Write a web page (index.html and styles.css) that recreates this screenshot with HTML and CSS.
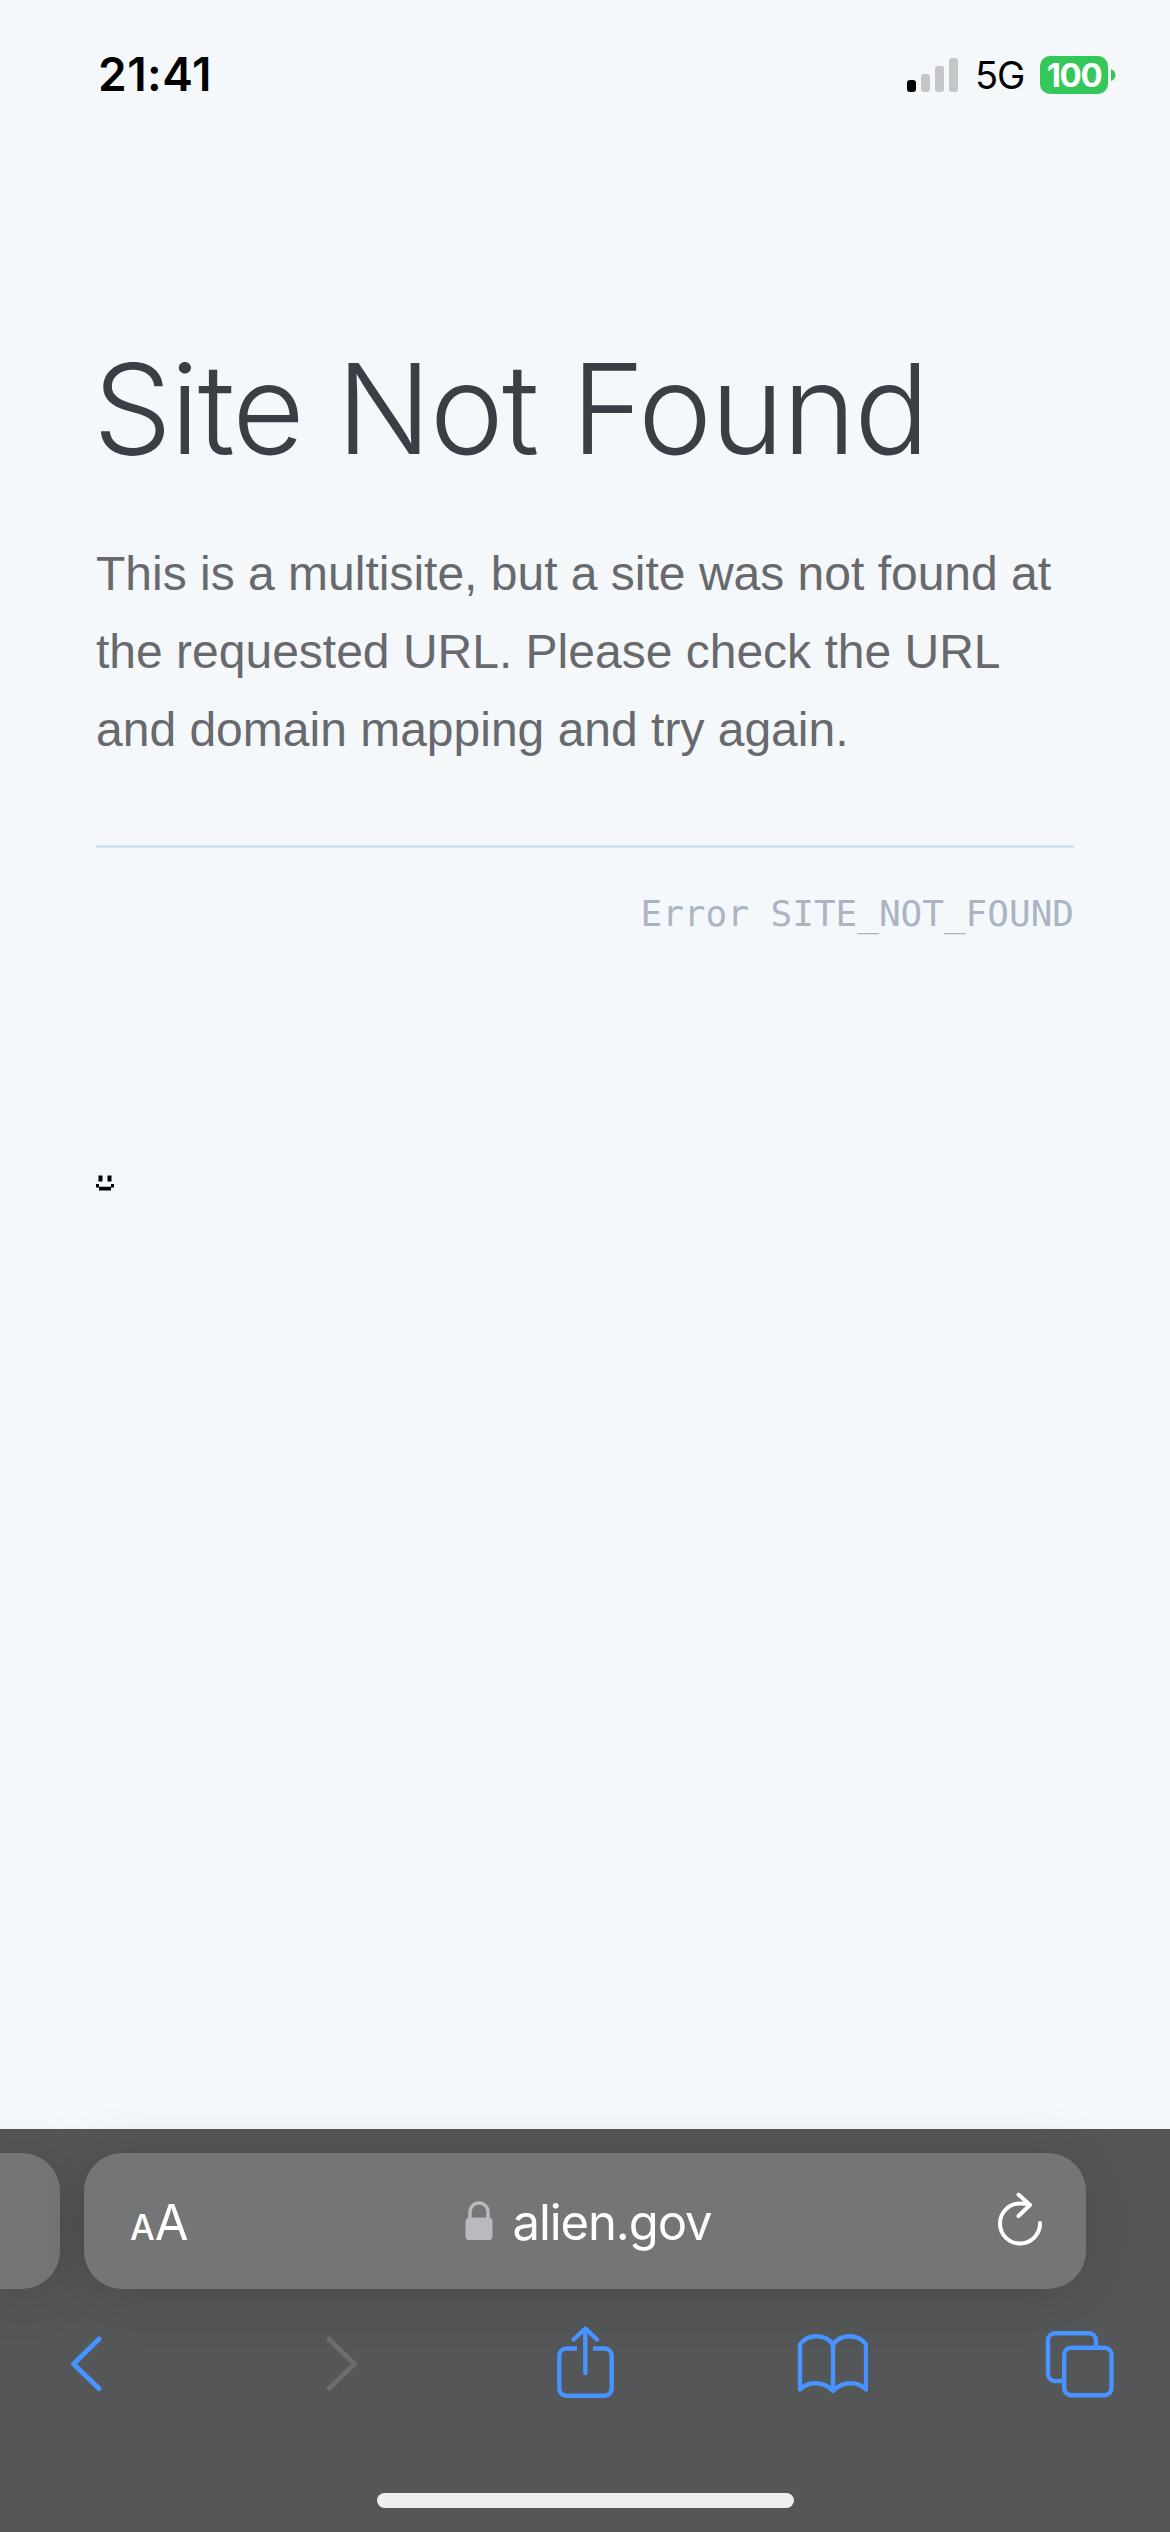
FILE: index.html
```html
<!DOCTYPE html>
<html lang="en">
<head>
    <meta charset="UTF-8">
    <meta name="viewport" content="width=device-width, initial-scale=1.0">
    <title>Site Not Found</title>
    <link rel="stylesheet" href="styles.css">
</head>
<body>
    <div class="status-bar">
        <span class="time">21:41</span>
        <div class="status-icons">
            <div class="signal">
                <span class="bar bar-1 active"></span>
                <span class="bar bar-2"></span>
                <span class="bar bar-3"></span>
                <span class="bar bar-4"></span>
            </div>
            <span class="network">5G</span>
            <div class="battery">100</div>
            <svg class="battery-cap" width="5" height="12" viewBox="0 0 5 12"><path d="M0 0Q4.500 2 4.500 6T0 12Z" fill="#34c759"/></svg>
        </div>
    </div>

    <main class="content">
        <h1>Site Not Found</h1>
        <p class="message">This is a multisite, but a site was not found at the requested URL. Please check the URL and domain mapping and try again.</p>
        <p class="error-code">Error SITE_NOT_FOUND</p>
        <!-- WordPress stats smiley -->
        <svg class="smiley" width="18" height="16" viewBox="0 0 18 16">
            <path d="M2.500 0.500h4v6h-4zM11.500 0.500h4v6h-4zM0 9h3v3.500H0zM15 9h3v3.500h-3zM3 11.800h12v3.700H3z"/>
        </svg>
    </main>

    <footer class="browser">
        <div class="tabs">
            <div class="tab prev-tab"></div>
            <div class="tab address">
                <div class="text-size"><span class="small-a">A</span><span class="big-a">A</span></div>
                <div class="url">
                    <svg width="28" height="40" viewBox="0 0 28 40">
                        <path d="M5 18V11a9 9 0 0 1 18 0V18" fill="none" stroke="#b9bac0" stroke-width="3.500"/>
                        <rect x="0.500" y="16.500" width="27" height="22.500" rx="4" fill="#b9bac0"/>
                    </svg>
                    <span>alien.gov</span>
                </div>
                <svg class="reload" width="48" height="60" viewBox="0 0 48 60">
                    <path d="M44 32A20 20 0 1 1 24 12.500Q29 12.500 34 14M22.500 3.500L34 14L22.500 25"/>
                </svg>
            </div>
        </div>
        <nav class="toolbar">
            <svg viewBox="0 0 72 80"><path d="M49 15L23.500 40L49 64.500"/></svg>
            <svg class="disabled" viewBox="0 0 72 80"><path d="M30 15L55.500 40L30 64.500"/></svg>
            <svg class="icon" viewBox="0 0 72 80">
                <path class="butt" d="M30 24.500H19.300a7 7 0 0 0-7 7V64.700a7 7 0 0 0 7 7H57.700a7 7 0 0 0 7-7V31.500a7 7 0 0 0-7-7H46"/>
                <path d="M38.300 49V5M26.500 15.500L38.300 4.500L50 15.500"/>
            </svg>
            <svg class="icon" viewBox="0 0 72 80">
                <path d="M4 20.500C12 9.500 30 9.500 37 21C44 9.500 62 9.500 70 20.500V65.500C62 57 46 57 37 67C28 57 12 57 4 65.500ZM37 21V67"/>
            </svg>
            <svg class="icon" viewBox="0 0 72 80">
                <path class="butt" d="M52 23.500V16.200a7 7 0 0 0-7-7H11a7 7 0 0 0-7 7V50a7 7 0 0 0 7 7H20"/>
                <rect x="20.200" y="23.700" width="47.300" height="47.500" rx="7"/>
            </svg>
        </nav>
        <div class="home-indicator"></div>
    </footer>
</body>
</html>
```

FILE: styles.css
```css
* {
    box-sizing: border-box;
}
body {
    margin: 0;
    height: 2532px;
    display: flex;
    flex-direction: column;
    background-color: #f4f8fb;
    font-family: Inter, sans-serif;
    overflow: hidden;
}
.status-bar {
    height: 149px;
    padding: 0 54px 0 98px;
    display: flex;
    align-items: center;
    justify-content: space-between;
    color: #000;
}
.time {
    font-size: 46px;
    font-weight: 600;
    line-height: 149px;
    letter-spacing: 0.5px;
}
.status-icons {
    display: flex;
    align-items: center;
}
.signal {
    display: flex;
    align-items: flex-end;
    gap: 5px;
    height: 34px;
    margin-right: 17px;
}
.bar {
    width: 9px;
    border-radius: 3px;
    background-color: #c4c6c8;
}
.bar.active {
    background-color: #000;
}
.bar-1 { height: 12px; }
.bar-2 { height: 18px; }
.bar-3 { height: 26px; }
.bar-4 { height: 34px; }
.network {
    width: 48px;
    margin-right: 17px;
    font-size: 38px;
    letter-spacing: -1px;
    line-height: 40px;
}
.battery {
    width: 68px;
    height: 38px;
    border-radius: 10px;
    background-color: #34c759;
    color: #fff;
    font-size: 33px;
    font-weight: 700;
    line-height: 38px;
    letter-spacing: -1.4px;
    text-align: center;
}
.battery-cap {
    margin-left: 3px;
}
.content {
    height: 1980px;
    padding: 188px 96px 0;
}
h1 {
    margin: 0 0 0 -3px;
    color: #3c3e45;
    font-size: 125px;
    font-weight: 300;
    line-height: 144px;
    letter-spacing: -1.7px;
    white-space: nowrap;
}
.message {
    margin: 54px 0 0;
    padding-bottom: 76px;
    border-bottom: 3px solid #d1e2eb;
    color: #68696d;
    font-family: "Liberation Sans", Arial, sans-serif;
    font-size: 48px;
    line-height: 78px;
}
.error-code {
    margin: 44px 0 0;
    color: #abb4c2;
    font-family: "DejaVu Sans Mono", monospace;
    font-size: 36px;
    line-height: 44px;
    text-align: right;
}
.smiley {
    display: block;
    margin-top: 239px;
}
.browser {
    height: 403px;
    background-color: #545657;
}
.tabs {
    display: flex;
    gap: 24px;
    padding-top: 24px;
}
.tab {
    height: 136px;
    border-radius: 38px;
    background-color: #747577;
    box-shadow: 0 4px 60px rgba(0, 0, 0, 0.14);
}
.prev-tab {
    width: 60px;
    border-radius: 0 38px 38px 0;
}
.address {
    width: 1002px;
    padding: 0 42px 0 46px;
    display: flex;
    align-items: center;
    justify-content: space-between;
    color: #fff;
}
.text-size {
    display: flex;
    align-items: baseline;
    width: 60px;
    padding-top: 7px;
    line-height: 60px;
}
.small-a {
    font-size: 35px;
    font-weight: 500;
}
.big-a {
    font-size: 49px;
}
.url {
    display: flex;
    align-items: center;
    gap: 20px;
    margin-right: 10px;
    font-size: 49px;
    line-height: 60px;
    letter-spacing: -1.1px;
}
.url span {
    padding-top: 3px;
}
.reload {
    fill: none;
    stroke: #fff;
    stroke-width: 4;
    stroke-linecap: round;
    stroke-linejoin: round;
}
.toolbar {
    display: flex;
    justify-content: space-between;
    padding: 35px 54px 0 50px;
}
.toolbar svg {
    width: 72px;
    height: 80px;
    fill: none;
    stroke: #4793ff;
    stroke-width: 5;
    stroke-linecap: round;
    stroke-linejoin: round;
}
.toolbar .icon {
    stroke-width: 4.4;
}
.toolbar .disabled {
    stroke: #6b6c6e;
}
.toolbar .butt {
    stroke-linecap: butt;
}
.home-indicator {
    width: 417px;
    height: 15px;
    margin: 89px 0 0 377px;
    border-radius: 8px;
    background-color: #eee;
}
```
